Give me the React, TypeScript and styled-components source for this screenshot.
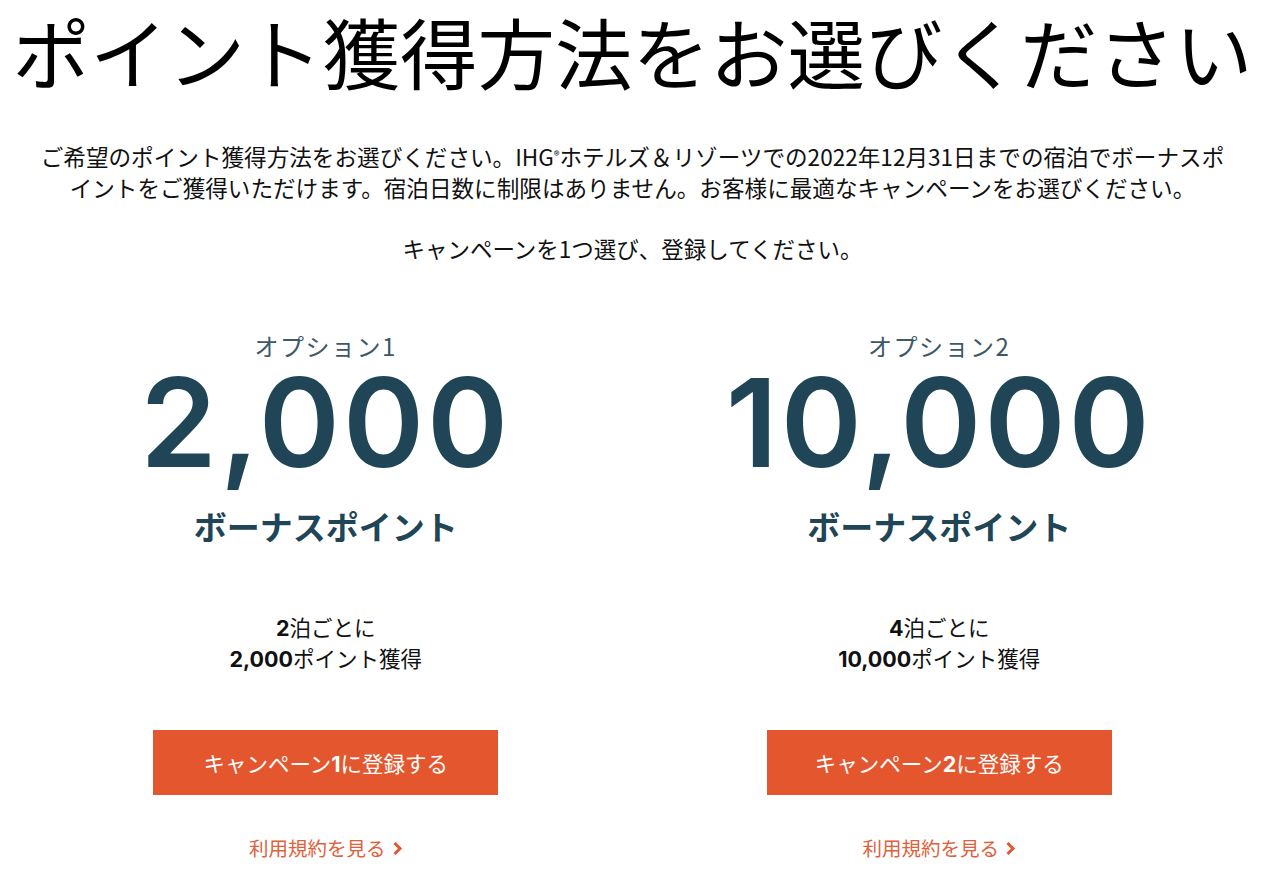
import React from 'react';
import styled, { createGlobalStyle } from 'styled-components';

const GlobalStyle = createGlobalStyle`
  body {
    margin: 0;
    background: #ffffff;
    color: #111111;
    font-family: "Noto Sans CJK JP", "Noto Sans", sans-serif;
  }
`;

type OptionType = {
  label: string;
  amount: string;
  nights: string;
  campaign: string;
};

const options: OptionType[] = [
  { label: 'オプション1', amount: '2,000', nights: '2', campaign: '1' },
  { label: 'オプション2', amount: '10,000', nights: '4', campaign: '2' },
];

const Chevron = () => (
  <svg width="11" height="15" viewBox="0 0 11 15">
    <path d="M2.5 2 L8 7.5 L2.5 13" fill="none" stroke="#e3572e" strokeWidth="3" />
  </svg>
);

export default function App() {
  return (
    <>
      <GlobalStyle />
      <Page>
        <Title>ポイント獲得方法をお選びください</Title>
        <Lead>
          ご希望のポイント獲得方法をお選びください。IHG<Reg>®</Reg>ホテルズ＆リゾーツでの2022年12月31日までの宿泊でボーナスポ
          <br />
          イントをご獲得いただけます。宿泊日数に制限はありません。お客様に最適なキャンペーンをお選びください。
        </Lead>
        <Instruction>キャンペーンを1つ選び、登録してください。</Instruction>
        <Options>
          {options.map((option) => (
            <Option key={option.label}>
              <OptionLabel>{option.label}</OptionLabel>
              <Amount>{option.amount}</Amount>
              <Bonus>ボーナスポイント</Bonus>
              <Detail>
                <Num>{option.nights}</Num>泊ごとに
                <br />
                <Num>{option.amount}</Num>ポイント獲得
              </Detail>
              <Button>
                キャンペーン<Num>{option.campaign}</Num>に登録する
              </Button>
              <TermsLink href="#">
                利用規約を見る
                <Chevron />
              </TermsLink>
            </Option>
          ))}
        </Options>
      </Page>
    </>
  );
}

const Page = styled.div`
  display: flex;
  flex-direction: column;
  align-items: center;
  width: 1265px;
  padding-bottom: 20px;
`;

const Title = styled.h1`
  margin: 4px 0 0;
  font-size: 77.5px;
  line-height: 92px;
  font-weight: 400;
  white-space: nowrap;
  text-align: center;
  color: #000000;
`;

const Lead = styled.p`
  margin: 43px 0 0;
  font-size: 22.6px;
  line-height: 31px;
  text-align: center;
  white-space: nowrap;
  color: #111111;
`;

const Reg = styled.span`
  font-size: 12px;
  vertical-align: 6px;
`;

const Instruction = styled.p`
  margin: 30px 0 0;
  font-size: 22.5px;
  line-height: 31px;
  text-align: center;
  color: #111111;
`;

const Options = styled.div`
  display: grid;
  grid-template-columns: 1fr 1fr;
  width: 1227px;
  margin-top: 66px;
`;

const Option = styled.div`
  display: flex;
  flex-direction: column;
  align-items: center;
`;

const OptionLabel = styled.div`
  font-size: 24px;
  line-height: 31px;
  letter-spacing: 1.5px;
  color: #3d5866;
`;

const Amount = styled.div`
  margin-top: 7px;
  font-family: Inter, "Noto Sans", sans-serif;
  font-size: 123px;
  line-height: 110px;
  font-weight: 600;
  letter-spacing: 3px;
  color: #1f4556;
`;

const Bonus = styled.div`
  margin-top: 27px;
  font-size: 33px;
  line-height: 43px;
  font-weight: 700;
  color: #1f4556;
`;

const Detail = styled.div`
  margin-top: 64px;
  font-size: 21.5px;
  line-height: 30px;
  text-align: center;
  color: #111111;
`;

const Num = styled.span`
  font-family: Inter, "Noto Sans", sans-serif;
  font-weight: 700;
`;

const Button = styled.button`
  margin-top: 56px;
  width: 345px;
  height: 65px;
  border: none;
  background: #e4572e;
  color: #ffffff;
  font-family: "Noto Sans CJK JP", "Noto Sans", sans-serif;
  font-size: 21.5px;
  cursor: pointer;
`;

const TermsLink = styled.a`
  display: flex;
  align-items: center;
  gap: 6px;
  margin-top: 38px;
  font-size: 19.5px;
  line-height: 30px;
  color: #e0603a;
  text-decoration: none;
`;
